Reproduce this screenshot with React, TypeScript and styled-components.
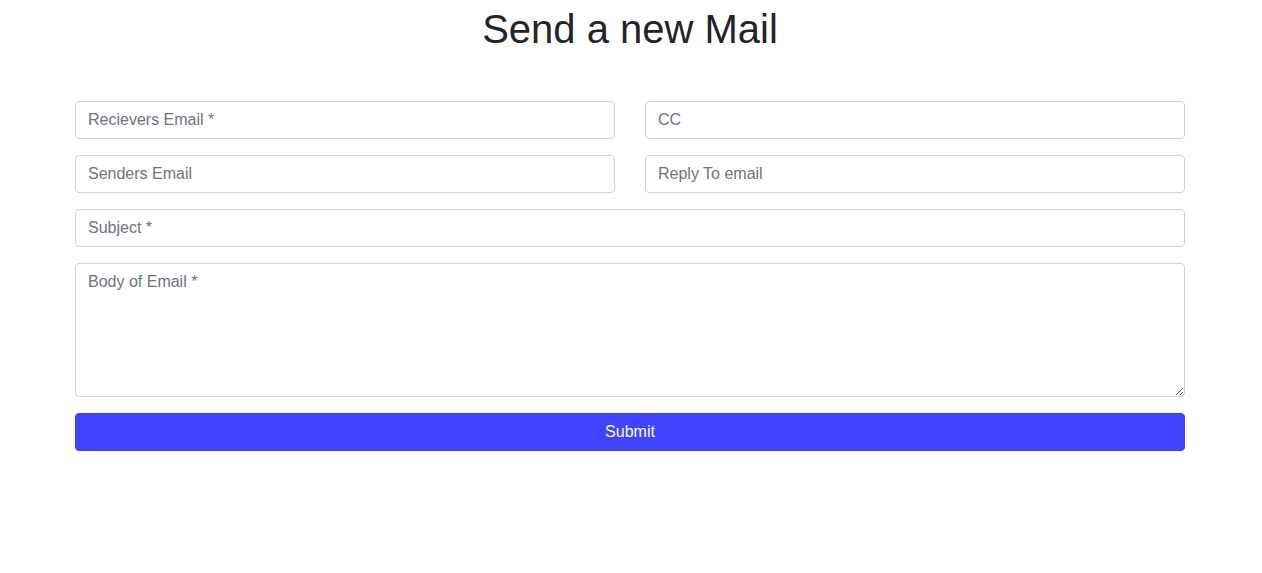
import React from "react";
import styled, { createGlobalStyle } from "styled-components";

const GlobalStyle = createGlobalStyle`
  *, *::before, *::after { box-sizing: border-box; }
  html, body { margin: 0; padding: 0; background: #fff; }
  body {
    font-family: "Liberation Sans", Arial, sans-serif;
    font-size: 16px;
    line-height: 1.5;
    color: #212529;
  }
`;

const Container = styled.div`
  width: 1110px;
  margin-left: calc(50% - 556px);
`;

const Title = styled.h1`
  margin: 5px 0 48px;
  font-size: 40px;
  font-weight: 500;
  line-height: 1.2;
  text-align: center;
  color: #212529;
`;

const Form = styled.form`
  display: grid;
  grid-template-columns: 1fr 1fr;
  column-gap: 30px;
  row-gap: 16px;
`;

const fieldBase = `
  display: block;
  width: 100%;
  padding: 6px 12px;
  font-family: "Liberation Sans", Arial, sans-serif;
  font-size: 16px;
  line-height: 1.5;
  color: #495057;
  background: #fff;
  border: 1px solid #ced4da;
  border-radius: 4px;
  outline: none;
  &::placeholder { color: #6c757d; opacity: 1; }
`;

const Input = styled.input<{ $full?: boolean }>`
  ${fieldBase}
  height: 38px;
  grid-column: ${(p) => (p.$full ? "1 / -1" : "auto")};
`;

const TextArea = styled.textarea`
  ${fieldBase}
  height: 134px;
  grid-column: 1 / -1;
  resize: vertical;
  margin: 0;
`;

const SubmitButton = styled.button`
  grid-column: 1 / -1;
  height: 38px;
  padding: 6px 12px;
  font-family: "Liberation Sans", Arial, sans-serif;
  font-size: 16px;
  line-height: 1.5;
  color: #fff;
  background: #3d43ff;
  border: 1px solid #3d43ff;
  border-radius: 4px;
  cursor: pointer;
`;

export default function App() {
  return (
    <>
      <GlobalStyle />
      <Container>
        <Title>Send a new Mail</Title>
        <Form onSubmit={(e) => e.preventDefault()}>
          <Input placeholder="Recievers Email *" />
          <Input placeholder="CC" />
          <Input placeholder="Senders Email" />
          <Input placeholder="Reply To email" />
          <Input $full placeholder="Subject *" />
          <TextArea rows={5} placeholder="Body of Email *" />
          <SubmitButton type="submit">Submit</SubmitButton>
        </Form>
      </Container>
    </>
  );
}
